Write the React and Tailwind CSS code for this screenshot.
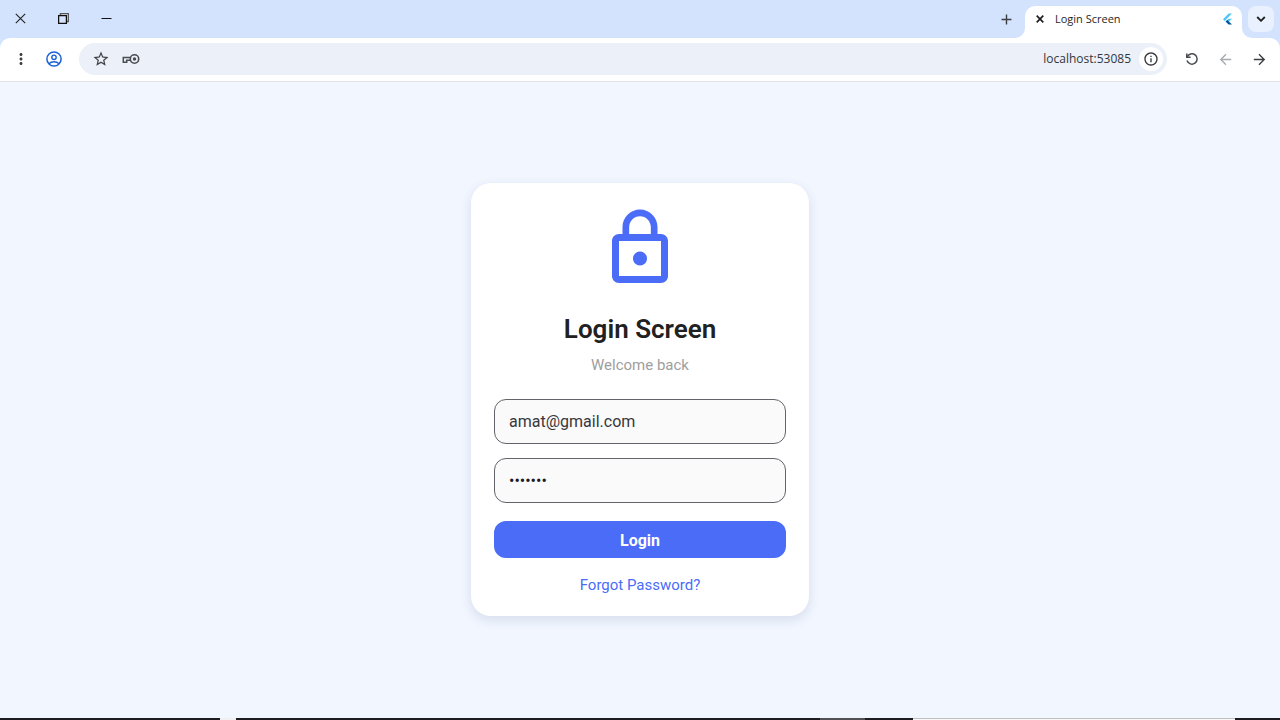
import React, { useState } from "react";
import {
  MdAdd,
  MdArrowBack,
  MdArrowForward,
  MdLockOutline,
  MdMoreVert,
  MdOutlineInfo,
  MdStarOutline,
} from "react-icons/md";

function RestoreIcon() {
  return (
    <svg width="11" height="11" viewBox="0 0 11 11" fill="none" stroke="#111111">
      <path d="M2.5 2.500V.5h8v8h-2" stroke="#55585e" strokeWidth="1.500" />
      <path d="M.6 2.600h7.800v7.800H.6z" strokeWidth="1.300" />
    </svg>
  );
}

function CloseIcon() {
  return (
    <svg width="11" height="11" viewBox="0 0 11 11" fill="none" stroke="#222222">
      <path d="M.8.8l9.4 9.4M10.2.8L.8 10.2" strokeWidth="1.1" />
    </svg>
  );
}

function MinimizeIcon() {
  return (
    <svg width="11" height="11" viewBox="0 0 11 11" stroke="#111111">
      <path d="M.5 5.5h10" />
    </svg>
  );
}

function TabCloseIcon() {
  return (
    <svg width="8" height="8" viewBox="0 0 8 8" fill="none" stroke="#1f1f1f">
      <path d="M.7.7l6.600 6.600M7.300.7L.7 7.300" strokeWidth="1.700" />
    </svg>
  );
}

function ChevronIcon() {
  return (
    <svg width="10" height="6" viewBox="0 0 10 6" fill="none" stroke="#1f1f1f">
      <path d="M1.200 1l3.800 3.800L8.800 1" strokeWidth="1.800" />
    </svg>
  );
}

function AccountIcon() {
  return (
    <svg width="16" height="16" viewBox="0 0 16 16" fill="none" stroke="#1a62d6">
      <circle cx="8" cy="8" r="7.1" strokeWidth="1.5" />
      <circle cx="8" cy="6.3" r="2.2" strokeWidth="1.4" />
      <path d="M3 12.8c1.3-1.4 3-2 5-2s3.7.6 5 2" strokeWidth="1.4" />
    </svg>
  );
}

function KeyIcon() {
  return (
    <svg width="18" height="12" viewBox="0 0 18 12" fill="none" stroke="#4a4d51">
      <circle cx="12.5" cy="6" r="4.200" strokeWidth="1.600" />
      <circle cx="12.5" cy="6" r="1.700" fill="#4a4d51" stroke="none" />
      <path d="M8.400 4.500H1.300v4.800h3.400V7.300h3.700" strokeWidth="1.500" />
    </svg>
  );
}

function ReloadIcon() {
  return (
    <svg width="14" height="14" viewBox="0 0 14 14" fill="none" stroke="#47494d">
      <path d="M1.8 1.4v3.8h3.8" strokeWidth="1.5" />
      <path d="M2.1 5A5.2 5.2 0 1 1 2 8.6" strokeWidth="1.5" />
    </svg>
  );
}

function FlutterLogo() {
  return (
    <svg width="9" height="12" viewBox="0 0 10 12">
      <path d="M6.2 0L0 6.2l1.9 1.9L10 0z" fill="#54c5f8" />
      <path d="M6.2 5.6L2.9 8.9l1.900 1.900L10 5.600z" fill="#54c5f8" />
      <path d="M2.900 8.900l1.900-1.900L10 12H6.200z" fill="#01579b" />
    </svg>
  );
}

// concave foot on either side of the active tab
function TabFoot({ className, d }) {
  return (
    <svg
      className={className}
      width="10"
      height="10"
      viewBox="0 0 10 10"
      fill="#ffffff"
    >
      <path d={d} />
    </svg>
  );
}

function TabBar() {
  return (
    <div className="flex h-[38px] justify-between bg-[#d3e2fd] pr-[6px] pl-[15px]">
      <div className="flex items-center gap-8 pb-px">
        <button aria-label="Close window">
          <CloseIcon />
        </button>
        <button aria-label="Restore window">
          <RestoreIcon />
        </button>
        <button aria-label="Minimize window">
          <MinimizeIcon />
        </button>
      </div>
      <div className="flex items-center">
        <button aria-label="New tab" className="mr-[10px] text-[#3c3f43]">
          <MdAdd size={17} />
        </button>
        <div className="relative flex h-8 w-[217px] items-center self-end rounded-t-[10px] bg-white pr-[10px] pb-[6px] pl-[11px]">
          <TabFoot
            className="absolute bottom-0 -left-[10px]"
            d="M10 0v10H0A10 10 0 0 0 10 0z"
          />
          <button aria-label="Close tab">
            <TabCloseIcon />
          </button>
          <span className="ml-[11px] font-['Open_Sans',sans-serif] text-[11px] leading-4 text-[#1f1f1f]">
            Login Screen
          </span>
          <span className="ml-auto">
            <FlutterLogo />
          </span>
          <TabFoot
            className="absolute -right-[10px] bottom-0"
            d="M0 0v10h10A10 10 0 0 1 0 0z"
          />
        </div>
        <button
          aria-label="Search tabs"
          className="ml-[6px] flex h-[26px] w-[26px] items-center justify-center rounded-lg bg-[#e9f0fe]"
        >
          <ChevronIcon />
        </button>
      </div>
    </div>
  );
}

function Toolbar() {
  const [url, setUrl] = useState("localhost:53085");

  return (
    <div className="bg-[#d3e2fd]">
      <div className="flex h-11 items-center rounded-t-[10px] border-b border-[#e0e3e7] bg-white px-3 pb-px">
        <button aria-label="Menu" className="text-[#3c3f43]">
          <MdMoreVert size={18} />
        </button>
        <button aria-label="Profile" className="ml-4">
          <AccountIcon />
        </button>
        <div className="ml-[17px] flex h-8 flex-1 items-center rounded-full bg-[#ebf0f9] pr-1 pl-[13px]">
          <button aria-label="Bookmark" className="text-[#3c3f43]">
            <MdStarOutline size={18} />
          </button>
          <button aria-label="Saved passwords" className="ml-3">
            <KeyIcon />
          </button>
          <input
            aria-label="Address"
            value={url}
            onChange={(e) => setUrl(e.target.value)}
            className="ml-auto w-60 bg-transparent text-right font-['Open_Sans',sans-serif] text-xs text-[#35373b] outline-none"
          />
          <button
            aria-label="Site information"
            className="ml-2 flex h-6 w-6 items-center justify-center rounded-full bg-white text-[#35373b]"
          >
            <MdOutlineInfo size={16} />
          </button>
        </div>
        <button aria-label="Reload" className="ml-[18px]">
          <ReloadIcon />
        </button>
        <button aria-label="Back" className="ml-[18px] text-[#a9abae]">
          <MdArrowBack size={17} />
        </button>
        <button aria-label="Forward" className="ml-[17px] text-[#3c3f43]">
          <MdArrowForward size={17} />
        </button>
      </div>
    </div>
  );
}

function LoginCard() {
  const [email, setEmail] = useState("amat@gmail.com");
  const [password, setPassword] = useState("1234567");

  const handleSubmit = (e) => {
    e.preventDefault();
  };

  return (
    <form
      onSubmit={handleSubmit}
      className="flex w-full max-w-[338px] flex-col items-center rounded-[20px] bg-white p-[23px] font-[Roboto,sans-serif] shadow-[0_4px_12px_rgba(30,50,90,0.12)]"
    >
      <MdLockOutline size={84} className="text-[#4a6cf7]" />
      <h1 className="mt-[23px] text-[26px] leading-8 font-semibold text-[#212121]">
        Login Screen
      </h1>
      <p className="mt-2 text-[15px] leading-6 text-[#9e9e9e]">Welcome back</p>
      <input
        type="email"
        aria-label="Email"
        value={email}
        onChange={(e) => setEmail(e.target.value)}
        className="mt-[22px] h-[45px] w-full rounded-xl border border-[#66626a] bg-[#fafafa] px-[14px] text-base text-[#38373b] outline-none"
      />
      <input
        type="password"
        aria-label="Password"
        value={password}
        onChange={(e) => setPassword(e.target.value)}
        className="mt-[14px] h-[45px] w-full rounded-xl border border-[#66626a] bg-[#fafafa] px-[14px] text-base text-[#1c1b1f] outline-none"
      />
      <button
        type="submit"
        className="mt-[18px] h-[37px] w-full rounded-xl bg-[#4a6cf7] pt-[2px] text-base font-bold text-white"
      >
        Login
      </button>
      <a href="#forgot" className="mt-[19px] text-[15px] leading-4 text-[#4a6cf7]">
        Forgot Password?
      </a>
    </form>
  );
}

// top edge of the windows lying behind the browser
function BottomEdge() {
  return (
    <div className="flex h-[2px] bg-[#1d1c22]">
      <div className="w-[220px]" />
      <div className="w-4 bg-[#f0f0f0]" />
      <div className="w-[584px]" />
      <div className="w-[45px] bg-[#505055]" />
      <div className="w-12" />
      <div className="flex-1 border-t border-[#c0c0c0] bg-[#f8f8f8]" />
      <div className="w-[45px]" />
    </div>
  );
}

export default function App() {
  return (
    <div className="flex min-h-screen flex-col bg-[#f1f6ff]">
      <header>
        <TabBar />
        <Toolbar />
      </header>
      <main className="flex flex-1 items-center justify-center pb-px">
        <LoginCard />
      </main>
      <BottomEdge />
    </div>
  );
}
